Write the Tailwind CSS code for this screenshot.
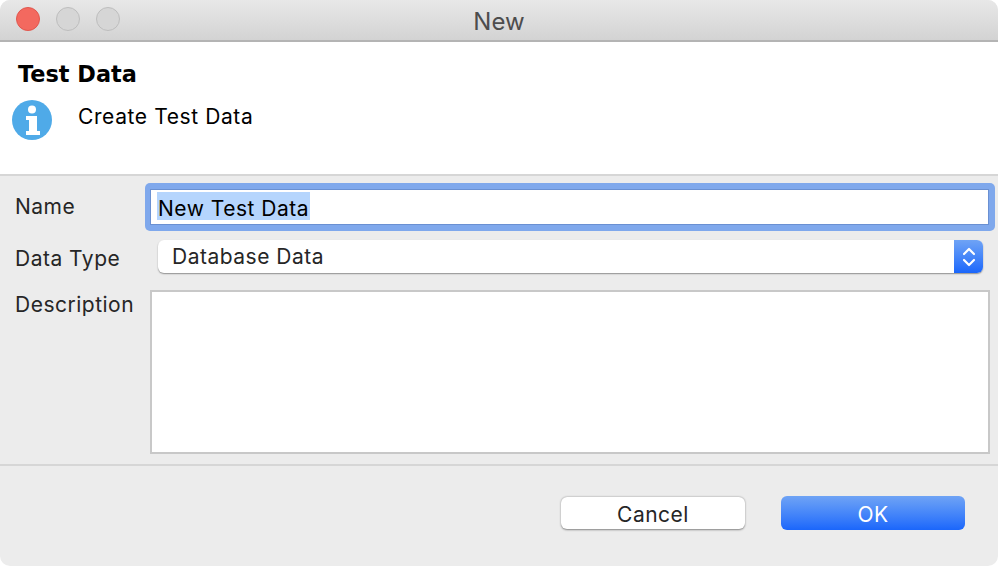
<!DOCTYPE html>
<html lang="en">
<head>
  <meta charset="UTF-8" />
  <title>New</title>
  <script src="https://cdn.jsdelivr.net/npm/@tailwindcss/browser@4"></script>
</head>
<body class="bg-white font-['Inter','Liberation_Sans',sans-serif] text-[21px] tracking-[0.5px] text-[#262626]">
  <div class="w-[998px] h-[566px] flex flex-col overflow-hidden rounded-t-[10px] rounded-b-[10px] bg-[#ececec]">

    <!-- Title bar -->
    <div class="relative h-[42px] shrink-0 flex items-center gap-4 pl-4 pb-[2px] bg-gradient-to-b from-[#e8e8e8] to-[#d3d3d3] border-b-2 border-[#b4b4b4]">
      <span class="w-6 h-6 rounded-full bg-[#f3695f] border border-[#e0574e]"></span>
      <span class="w-6 h-6 rounded-full bg-[#d6d6d6] border border-[#bdbdbd]"></span>
      <span class="w-6 h-6 rounded-full bg-[#d6d6d6] border border-[#bdbdbd]"></span>
      <span class="absolute inset-x-0 top-[8px] text-center text-[#4d4d4d] leading-7 text-[24px] tracking-normal">New</span>
    </div>

    <!-- Header -->
    <div class="h-[132px] shrink-0 bg-white pl-3 text-black">
      <h1 class="pl-[6px] pt-[18px] font-['DejaVu_Sans',sans-serif] text-[22.400px] tracking-normal leading-7 font-bold">Test Data</h1>
      <div class="flex items-start gap-[26px] mt-[12px]">
        <svg width="40" height="40" viewBox="0 0 40 40">
          <circle cx="20" cy="20" r="20" fill="#4faae8"/>
          <circle cx="20" cy="9.500" r="4" fill="#fff"/>
          <path d="M14 16h11v15h3v4H14v-4h3V20h-3z" fill="#fff"/>
        </svg>
        <span class="leading-6 mt-[5px] tracking-[0.6px]">Create Test Data</span>
      </div>
    </div>
    <div class="h-[2px] shrink-0 bg-[#d6d6d6]"></div>

    <!-- Form -->
    <div class="h-[288px] shrink-0 pl-[15px] pt-px">
      <div class="flex items-start h-[62px]">
        <label class="w-[131px] shrink-0 pt-[18px] leading-6">Name</label>
        <div class="mt-[6px] -ml-px w-[850px] h-[48px] shrink-0 rounded-[5px] bg-[#7fa8ec] pt-[6px] pl-[5px] pr-[6px]">
          <div class="h-[36px] border border-[#6a90d2] bg-white pl-[6px] pt-[2px] flex text-black">
            <span class="bg-[#b5d5fd] h-[28px] leading-[33px] px-[1px]">New Test Data</span>
          </div>
        </div>
      </div>
      <div class="flex items-start h-[52px]">
        <label class="w-[143px] shrink-0 pt-[8px] leading-6">Data Type</label>
        <div class="mt-[1px] w-[825px] h-[33px] shrink-0 flex rounded-[6px] bg-white shadow-[0_1px_1.5px_rgba(0,0,0,0.4)] overflow-hidden">
          <span class="flex-1 pl-[14px] leading-[33px]">Database Data</span>
          <span class="w-[29px] flex items-center justify-center bg-gradient-to-b from-[#6fa3f5] to-[#1a66fb]">
            <svg width="14" height="26" viewBox="0 0 14 26" fill="none" stroke="#fff" stroke-width="2.200" stroke-linecap="round" stroke-linejoin="round">
              <path d="M2 10 7 5l5 5"/>
              <path d="M2 16l5 5 5-5"/>
            </svg>
          </span>
        </div>
      </div>
      <div class="flex items-start">
        <label class="w-[135px] shrink-0 pt-[2px] leading-6">Description</label>
        <div class="w-[840px] h-[164px] -mt-px border-2 border-[#c8c8c8] bg-white"></div>
      </div>
    </div>
    <div class="h-[2px] shrink-0 bg-[#d6d6d6]"></div>

    <!-- Buttons -->
    <div class="flex items-start pl-[561px] pt-[30px] gap-[36px]">
      <button class="mt-[1px] w-[184px] h-[32px] rounded-[6px] bg-white shadow-[0_0.5px_2px_rgba(0,0,0,0.45)] leading-[36px]">Cancel</button>
      <button class="w-[184px] h-[34px] rounded-[6px] bg-gradient-to-b from-[#6fa3f5] to-[#1a66fb] text-white leading-[38px]">OK</button>
    </div>
  </div>
</body>
</html>
